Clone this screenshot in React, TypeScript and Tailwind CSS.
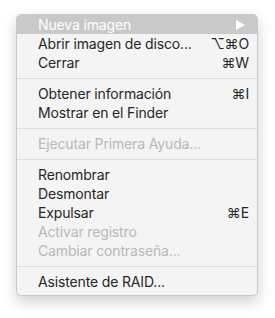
type Item =
  | { kind: "sep" }
  | { kind: "item"; label: string; shortcut?: string; disabled?: boolean; active?: boolean; submenu?: boolean };

const items: Item[] = [
  { kind: "item", label: "Nueva imagen", active: true, submenu: true },
  { kind: "item", label: "Abrir imagen de disco...", shortcut: "⌥⌘O" },
  { kind: "item", label: "Cerrar", shortcut: "⌘W" },
  { kind: "sep" },
  { kind: "item", label: "Obtener información", shortcut: "⌘I" },
  { kind: "item", label: "Mostrar en el Finder" },
  { kind: "sep" },
  { kind: "item", label: "Ejecutar Primera Ayuda...", disabled: true },
  { kind: "sep" },
  { kind: "item", label: "Renombrar" },
  { kind: "item", label: "Desmontar" },
  { kind: "item", label: "Expulsar", shortcut: "⌘E" },
  { kind: "item", label: "Activar registro", disabled: true },
  { kind: "item", label: "Cambiar contraseña...", disabled: true },
  { kind: "sep" },
  { kind: "item", label: "Asistente de RAID..." },
];

export default function App() {
  return (
    <div
      className="w-[275px] h-[318px] bg-white pt-[14px] pl-[16px]"
      style={{ fontFamily: "Inter, 'Liberation Sans', sans-serif" }}
    >
      <div className="w-[242px] bg-[#f4f4f4] border border-[#c9c9c9] rounded-[5px] pb-[4px] shadow-[0_6px_14px_rgba(0,0,0,0.18)] overflow-hidden">
        {items.map((it, i) =>
          it.kind === "sep" ? (
            <div key={i} className="h-[12px] flex items-center">
              <div className="w-full h-px bg-[#dedede]" />
            </div>
          ) : (
            <div
              key={i}
              className={`h-[19px] flex items-center pl-[21px] pr-[8px] text-[14px] leading-none tracking-[-0.15px] ${
                it.active ? "bg-[#c9c9c9] text-white" : it.disabled ? "text-[#b8b8b8]" : "text-[#262626]"
              }`}
            >
              <span className="flex-1">{it.label}</span>
              {it.shortcut && <span>{it.shortcut}</span>}
              {it.submenu && (
                <svg width="9" height="10" viewBox="0 0 9 10" className="mr-[4px]">
                  <path d="M0 0 L9 5 L0 10 Z" fill="#ffffff" />
                </svg>
              )}
            </div>
          )
        )}
      </div>
    </div>
  );
}
